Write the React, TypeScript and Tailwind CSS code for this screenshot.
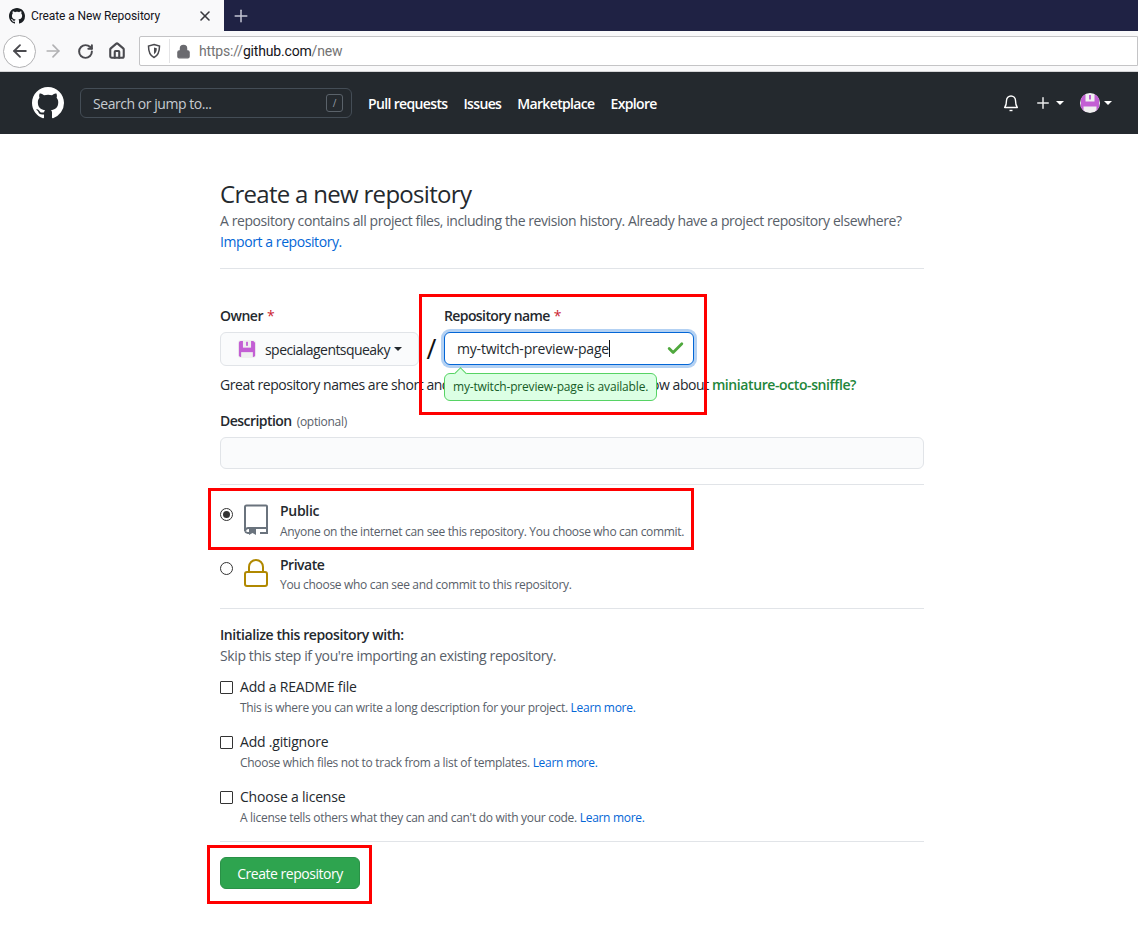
import { ArrowLeft, ArrowRight, Check, Home, Lock, Plus, RotateCw, X } from "lucide-react";

const GH_PATH =
  "M8 0C3.58 0 0 3.58 0 8c0 3.54 2.29 6.53 5.47 7.59.4.07.55-.17.55-.38 0-.19-.01-.82-.01-1.49-2.01.37-2.53-.49-2.69-.94-.09-.23-.48-.94-.82-1.13-.28-.15-.68-.52-.01-.53.63-.01 1.08.58 1.23.82.72 1.21 1.87.87 2.33.66.07-.52.28-.87.51-1.07-1.78-.2-3.64-.89-3.64-3.95 0-.87.31-1.59.82-2.15-.08-.2-.36-1.02.08-2.12 0 0 .67-.21 2.2.82.64-.18 1.32-.27 2-.27.68 0 1.36.09 2 .27 1.53-1.04 2.2-.82 2.2-.82.44 1.1.16 1.92.08 2.12.51.56.82 1.27.82 2.15 0 3.07-1.87 3.75-3.65 3.95.29.25.54.73.54 1.48 0 1.07-.01 1.93-.01 2.2 0 .21.15.46.55.38A8.013 8.013 0 0016 8c0-4.42-3.58-8-8-8z";

function GithubMark({ size, className }: { size: number; className: string }) {
  return (
    <svg width={size} height={size} viewBox="0 0 16 16" className={className}>
      <path fillRule="evenodd" d={GH_PATH} fill="currentColor" />
    </svg>
  );
}

function Avatar({ size }: { size: number }) {
  return (
    <svg width={size} height={size} viewBox="0 0 20 20">
      <rect width="20" height="20" fill="#f0f0f0" />
      <path d="M3 1h14l2 2v14a2 2 0 01-2 2H3a2 2 0 01-2-2V3a2 2 0 012-2z" fill="#c35fd4" />
      <rect x="5.500" y="1" width="9" height="7.500" fill="#f0f0f0" />
      <rect x="9" y="2" width="2" height="4.500" fill="#c35fd4" />
      <rect x="3.500" y="13.500" width="13" height="5.500" fill="#f0f0f0" />
    </svg>
  );
}

function Caret({ className }: { className: string }) {
  return <span className={`inline-block w-0 h-0 border-x-[4px] border-x-transparent border-t-[4px] ${className}`} />;
}

function Required() {
  return <span className="text-[#cb2431] ml-1 font-normal">*</span>;
}

function InitOption({ title, desc }: { title: string; desc: string }) {
  return (
    <div className="flex h-[55px]">
      <span className="w-[13px] h-[13px] mt-[6px] border border-[#333] rounded-[1px] bg-white shrink-0" />
      <div className="ml-[7px]">
        <div className="text-[14px] leading-[24px] font-medium tracking-[-0.2px] text-[#24292e]">{title}</div>
        <div className="mt-[1px] text-[12px] leading-[16px] tracking-[-0.3px] text-[#586069]">
          {desc} <a className="text-[#0366d6]">Learn more.</a>
        </div>
      </div>
    </div>
  );
}

export default function App() {
  return (
    <div className="relative min-h-[926px] bg-white font-['Open_Sans',sans-serif] overflow-hidden">
      {/* Browser chrome */}
      <div className="h-[31px] bg-[#1f2244] flex">
        <div className="w-[224px] bg-[#f9f9fa] flex items-center pl-[9px] pr-[11px] font-['Roboto',sans-serif]">
          <GithubMark size={16} className="text-[#1b1f23]" />
          <span className="ml-[6px] text-[12px] tracking-[-0.1px] text-[#15141a] flex-1">Create a New Repository</span>
          <X size={16} strokeWidth={2.4} className="text-[#3a3a3f]" />
        </div>
        <div className="w-[34px] flex items-center justify-center">
          <Plus size={20} strokeWidth={1.8} className="text-[#c4c6d4]" />
        </div>
      </div>
      <div className="h-[41px] bg-[#f9f9fa] border-b border-[#d4d4d6] flex items-center pl-[3px]">
        <div className="w-[33px] h-[33px] rounded-full border border-[#b1b1b3] bg-white flex items-center justify-center">
          <ArrowLeft size={20} strokeWidth={2.2} className="text-[#4a4a4f]" />
        </div>
        <ArrowRight size={20} strokeWidth={2} className="ml-[7px] text-[#b1b1b3]" />
        <RotateCw size={17} className="ml-[14px] text-[#4a4a4f]" strokeWidth={2.8} />
        <Home size={18} className="ml-[14px] text-[#4a4a4f]" strokeWidth={2.8} />
        <div className="ml-[13px] flex-1 h-[30px] bg-white border border-[#c4c4c6] flex items-center pl-[6px] rounded-l-[2px] font-['Roboto',sans-serif]">
          <svg width="16" height="16" viewBox="0 0 16 16">
            <path d="M8 1.500l5.500 1.500c0 5-1 9.500-5.500 11.500C3.500 12.500 2.500 8 2.500 3z" fill="none" stroke="#4a4a4f" strokeWidth="1.500" />
            <path d="M8 4.500l2.800.800c0 2.500-.600 4.700-2.800 6z" fill="#4a4a4f" />
          </svg>
          <span className="ml-[7px] h-[24px] w-px bg-[#e4e4e6]" />
          <Lock size={15} className="ml-[6px] text-[#6a6a6f] fill-[#6a6a6f]" />
          <span className="ml-[8px] text-[14px] tracking-[-0.18px] text-[#737373]">
            https://<span className="text-[#15141a]">github.com</span>/new
          </span>
        </div>
      </div>

      {/* Site header */}
      <header className="h-[62px] bg-[#24292e] flex items-center pl-[32px] pr-[26px] text-white">
        <GithubMark size={32} className="text-white" />
        <div className="ml-[16px] w-[272px] h-[30px] border border-[#444d56] rounded-[6px] flex items-center justify-between pl-[12px] pr-[8px]">
          <span className="text-[14px] tracking-[-0.45px] text-[#c6cbd1]">Search or jump to...</span>
          <span className="w-[17px] h-[18px] border border-[#5a626a] rounded-[3px] text-[10px] text-[#959da5] flex items-center justify-center">/</span>
        </div>
        <nav className="ml-[16px] flex gap-[16px] text-[14px] font-semibold tracking-[-0.65px]">
          <a>Pull requests</a>
          <a>Issues</a>
          <a>Marketplace</a>
          <a>Explore</a>
        </nav>
        <div className="ml-auto flex items-center">
          <svg width="14" height="17" viewBox="0 0 14 17" fill="none" stroke="#fff" strokeWidth="1.400" className="mr-[16px]">
            <path d="M7 1a4.500 4.500 0 00-4.500 4.500c0 3.500-.8 5.500-1.800 7h12.600c-1-1.500-1.800-3.500-1.800-7A4.500 4.500 0 007 1z" strokeLinejoin="round" />
            <path d="M5.500 15.500h3" />
          </svg>
          <Plus size={18} strokeWidth={2} className="text-[#e8e9ea]" />
          <Caret className="ml-[4px] border-t-white" />
          <span className="ml-[16px] w-[20px] h-[20px] rounded-full overflow-hidden">
            <Avatar size={20} />
          </span>
          <Caret className="ml-[4px] border-t-white" />
        </div>
      </header>

      {/* Form */}
      <main className="w-[704px] ml-[220px] text-[#24292e]">
        <div className="pt-[43px] pb-[16px] border-b border-[#e1e4e8]">
          <h1 className="text-[24px] leading-[33px] tracking-[-0.7px]">Create a new repository</h1>
          <p className="text-[14px] leading-[21px] tracking-[-0.42px] text-[#586069]">
            A repository contains all project files, including the revision history. Already have a project repository elsewhere?
            <br />
            <a className="text-[#0366d6]">Import a repository.</a>
          </p>
        </div>

        <div className="mt-[36px] flex items-start">
          <div className="w-[199px]">
            <div className="text-[14px] leading-[21px] font-semibold tracking-[-0.5px] h-[27px]">Owner<Required /></div>
            <div className="h-[34px] bg-[#fafbfc] border border-[#e1e4e8] rounded-[6px] flex items-center pl-[17px]">
              <span className="rounded-[3px] overflow-hidden w-[18px] h-[18px]"><Avatar size={18} /></span>
              <span className="ml-[9px] text-[14px] tracking-[-0.55px]">specialagentsqueaky</span>
              <Caret className="ml-[4px] border-t-[#24292e]" />
            </div>
          </div>
          <div className="w-[25px] mt-[27px] text-center text-[27px] leading-[34px] text-[#111]">/</div>
          <div className="w-[250px] relative">
            <div className="text-[14px] leading-[21px] font-semibold tracking-[-0.6px] h-[27px]">Repository name<Required /></div>
            <div className="h-[33px] bg-white border border-[#0366d6] rounded-[6px] shadow-[0_0_0_3px_rgba(3,102,214,0.3)] flex items-center pl-[12px] pr-[8px] justify-between">
              <span className="text-[14px] tracking-[-0.2px] flex items-center">my-twitch-preview-page<span className="w-px h-[17px] bg-[#111]" /></span>
              <Check size={19} strokeWidth={3.5} className="text-[#4fa83d]" />
            </div>
            {/* availability note floats over the help text */}
            <div className="absolute left-0 top-[68px] h-[28px] px-[8px] bg-[#dcffe4] border border-[#56d364] rounded-[6px] text-[12px] tracking-[-0.17px] text-[#165c26] flex items-center whitespace-nowrap z-10">
              my-twitch-preview-page is available.
              <span className="absolute left-[11px] -top-[5px] w-[9px] h-[9px] bg-[#dcffe4] border-l border-t border-[#56d364] rotate-45" />
            </div>
          </div>
        </div>

        <p className="mt-[8px] text-[14px] leading-[21px] tracking-[-0.45px] text-[#24292e]">
          Great repository names are short and memorable. Need inspiration? How about{" "}
          <a className="text-[#22863a] font-semibold tracking-[-0.4px]">miniature-octo-sniffle?</a>
        </p>

        <div className="mt-[15px] text-[14px] leading-[21px] font-semibold tracking-[-0.55px]">
          Description <span className="ml-[2px] text-[12px] font-normal tracking-[-0.3px] text-[#586069]">(optional)</span>
        </div>
        <div className="mt-[5px] h-[32px] bg-[#fafbfc] border border-[#e1e4e8] rounded-[6px]" />
        <div className="mt-[15px] border-b border-[#e1e4e8]" />

        <div className="mt-[15px] flex h-[54px]">
          <span className="mt-[8px] w-[13px] h-[13px] rounded-full border border-[#333] bg-white flex items-center justify-center shrink-0">
            <span className="w-[7px] h-[7px] rounded-full bg-[#333]" />
          </span>
          <svg width="26" height="32" viewBox="0 0 26 32" className="ml-[10px] mt-[4px] shrink-0" fill="none" stroke="#6a737d" strokeWidth="2">
            <path d="M2 27V3a1.500 1.500 0 011.500-1.500H23a1 1 0 011 1V29h-7M2 27a3 3 0 003 2h1M2 27a3.500 3.500 0 013-3h19" />
            <path d="M6 25h7v6l-3.500-2L6 31z" fill="#6a737d" stroke="none" />
          </svg>
          <div className="ml-[11px]">
            <div className="text-[14px] leading-[21px] font-semibold tracking-[-0.3px]">Public</div>
            <div className="text-[12px] leading-[18px] tracking-[-0.32px] mt-[2px] text-[#586069]">Anyone on the internet can see this repository. You choose who can commit.</div>
          </div>
        </div>
        <div className="flex h-[54px]">
          <span className="mt-[8px] w-[13px] h-[13px] rounded-full border border-[#333] bg-white shrink-0" />
          <svg width="26" height="30" viewBox="0 0 26 30" className="ml-[10px] mt-[4px] shrink-0" fill="none" stroke="#b08800" strokeWidth="2">
            <path d="M6 14V9a7 7 0 0114 0v5" />
            <rect x="2" y="14" width="22" height="14" rx="2" />
          </svg>
          <div className="ml-[11px]">
            <div className="text-[14px] leading-[21px] font-semibold tracking-[-0.5px]">Private</div>
            <div className="text-[12px] leading-[18px] tracking-[-0.32px] mt-[1px] text-[#586069]">You choose who can see and commit to this repository.</div>
          </div>
        </div>
        <div className="border-b border-[#e1e4e8]" />

        <div className="mt-[15px] text-[14px] leading-[21px] font-semibold tracking-[-0.4px]">Initialize this repository with:</div>
        <div className="text-[14px] leading-[21px] tracking-[-0.38px] text-[#586069]">Skip this step if you're importing an existing repository.</div>

        <div className="mt-[9px]">
          <InitOption title="Add a README file" desc="This is where you can write a long description for your project." />
          <InitOption title="Add .gitignore" desc="Choose which files not to track from a list of templates." />
          <InitOption title="Choose a license" desc="A license tells others what they can and can't do with your code." />
        </div>

        <div className="border-b border-[#e1e4e8] mt-[1px]" />
        <button className="mt-[15px] w-[140px] h-[32px] bg-[#2ea44f] border border-[#2a9147] rounded-[6px] text-white text-[14px] tracking-[-0.47px]">Create repository</button>
      </main>

      {/* Red annotation boxes */}
      <div className="absolute left-[419px] top-[294px] w-[288px] h-[121px] border-[3px] border-[#ff0000]" />
      <div className="absolute left-[208px] top-[488px] w-[486px] h-[62px] border-[3px] border-[#ff0000]" />
      <div className="absolute left-[207px] top-[845px] w-[165px] h-[59px] border-[3px] border-[#ff0000]" />
    </div>
  );
}
